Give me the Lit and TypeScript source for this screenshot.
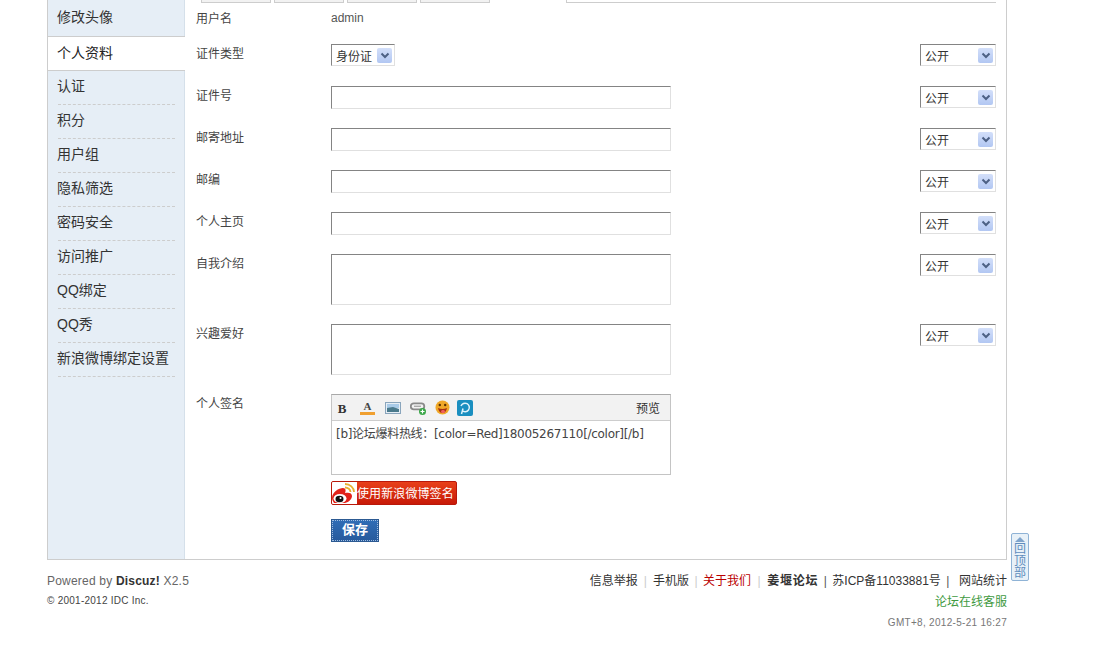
import { LitElement, html, css } from "lit";
import { customElement } from "lit/decorators.js";

const FONT = css`"Liberation Sans", "Noto Sans CJK SC", sans-serif`;

const arrow = html`<span class="arrow"><svg width="14" height="14" viewBox="0 0 14 14"><path d="M3.5 5.5 L7 9 L10.5 5.5" fill="none" stroke="#4d6185" stroke-width="2"/></svg></span>`;

@customElement("app-root")
export class AppRoot extends LitElement {
  static styles = css`
    :host { display: block; font: 12px ${FONT}; color: #444; height: 666px; overflow: hidden; background: #fff; }
    .wrap { width: 960px; margin-left: 47px; box-sizing: border-box; height: 560px; border: 1px solid #cdcdcd; border-top: 0; display: flex; }
    .side { width: 136px; flex: none; background: #e6eef6; border-right: 1px solid #d5e0ea; font-size: 14px; color: #333; }
    .side .it { height: 29px; padding-bottom: 4px; margin: 0 9px 0 10px; border-bottom: 1px dashed #cdcdcd; display: flex; align-items: center; line-height: 20px; text-indent: -1px; }
    .side .it.first { height: 36px; padding-bottom: 2px; border-bottom: 0; box-sizing: border-box; }
    .side .act { height: 29px; padding: 0 0 4px 9px; background: #fff; border-top: 1px solid #cdcdcd; border-bottom: 1px solid #cdcdcd; margin-right: -1px; display: flex; align-items: center; color: #222; position: relative; }
    .main { flex: 1; min-width: 0; display: flex; flex-direction: column; }
    .tabs { height: 3px; display: flex; padding-left: 16px; gap: 3px; flex: none; }
    .tabs i { width: 68px; height: 2px; border: 1px solid #cdcdcd; border-top: 0; background: #f2f2f2; display: block; }
    .tabs b { display: block; height: 2px; width: 429px; border: 1px solid #cdcdcd; border-top: 0; border-right: 0; margin-left: 73px; }
    .form { padding-left: 11px; }
    .row { display: flex; }
    .first-row { height: 32px; padding-top: 7px; box-sizing: border-box; }
    .lab { width: 135px; flex: none; font-size: 12px; color: #444; line-height: 16px; padding-top: 2px; }
    .first-row .lab { padding-top: 1px; }
    .ctl { width: 340px; flex: none; }
    .admin { line-height: 16px; color: #555; }
    .gap { height: 9px; }
    .sp { flex: 1; }
    .pub { width: 76px; margin-right: 10px; flex: none; }
    .sel { height: 22px; box-sizing: border-box; border: 1px solid; border-color: #848484 #e0e0e0 #e0e0e0 #848484; display: flex; align-items: center; justify-content: space-between; padding: 0 2px 0 4px; font-size: 12px; color: #333; background: #fff; }
    .sel.short { width: 64px; }
    .arrow { width: 15px; height: 15px; background: linear-gradient(#d3dffa, #b2c7f2); border-radius: 2px; display: flex; align-items: center; justify-content: center; }
    .inp { width: 340px; height: 23px; box-sizing: border-box; border: 1px solid; border-color: #848484 #e0e0e0 #e0e0e0 #848484; background: #fff; }
    .ta { height: 51px; }
    .ed { width: 340px; height: 81px; box-sizing: border-box; border: 1px solid #c4c4c4; border-top-color: #a9a9a9; }
    .bar { height: 25px; background: #f2f2f2; border-bottom: 1px solid #cdcdcd; display: flex; align-items: center; padding-left: 3px; gap: 9px; }
    .bar svg { display: block; flex: none; }
    .bar svg.a { margin-left: 1px; }
    .bar svg.tight { margin-left: -2px; }
    .prev { margin-left: auto; margin-right: 10px; color: #333; }
    .txt { padding: 5px 4px; line-height: 16px; font-size: 12px; color: #444; white-space: nowrap; letter-spacing: -.3px; font-family: "DejaVu Sans", "Noto Sans CJK SC", sans-serif; }
    .wb { margin-top: 6px; width: 126px; height: 24px; box-sizing: border-box; display: flex; align-items: center; background: linear-gradient(#e8401a, #c81a08); border: 1px solid #b9180a; border-radius: 2px; color: #fff; font-size: 12px; overflow: hidden; }
    .wb .ic { width: 25px; height: 22px; background: #fff; flex: none; display: block; }
    .wb span { white-space: nowrap; padding-bottom: 2px; letter-spacing: .1px; }
    .save { margin-top: 14px; width: 48px; height: 23px; box-sizing: border-box; background: linear-gradient(#2f6db6, #275a9c); border: 1px solid #2c5a92; outline: 1px dotted #9fbde0; outline-offset: -2px; color: #fff; font-weight: bold; font-size: 13px; display: flex; align-items: center; justify-content: center; padding-bottom: 4px; }
    .foot { width: 960px; margin-left: 47px; display: flex; justify-content: space-between; position: relative; }
    .fl { padding-top: 13px; }
    .pw { font-size: 12px; color: #666; line-height: 16px; letter-spacing: .2px; }
    .pw b { color: #333; }
    .cp { font-size: 10px; color: #444; margin-top: 6px; line-height: 12px; letter-spacing: .25px; }
    .fr { padding-top: 13px; text-align: right; }
    .links { font-size: 12px; line-height: 16px; color: #333; display: flex; justify-content: flex-end; align-items: center; }
    .links .s { color: #ccc; margin: 0 6.5px; }
    .links .s.f { margin: 0 6px; }
    .links .s.n { margin: 0 5.5px; }
    .links .s.d { color: #555; margin: 0 5.5px; }
    .links .red { color: #ba0000; }
    .links .bd { font-weight: bold; color: #333; letter-spacing: .75px; }
    .links .st { margin-left: 4px; }
    .on { color: #3f9a3f; margin-top: 5px; line-height: 16px; }
    .gmt { font-size: 10px; color: #777; margin-top: 6px; line-height: 14px; letter-spacing: .3px; }
    .top { position: absolute; left: 964px; top: -27px; width: 18px; height: 48px; box-sizing: border-box; border: 1px solid #8fb3d6; border-radius: 2px; background: #e8f1f8; color: #5f8dbd; font-size: 12px; line-height: 12px; text-align: center; padding-top: 9px; }
    .top::before { content: ""; position: absolute; left: 3px; top: 3px; border: 5px solid transparent; border-top: 0; border-bottom: 5px solid #7fa4cc; }
  `;

  private sel(t: string, short = false) {
    return html`<div class="sel ${short ? "short" : ""}">${t}${arrow}</div>`;
  }

  private row(label: string, ctl: unknown, pub: boolean, h: number) {
    return html`<div class="row" style="height:${h}px">
      <div class="lab">${label}</div>
      <div class="ctl">${ctl}</div>
      <div class="sp"></div>
      ${pub ? html`<div class="pub">${this.sel("公开")}</div>` : html`<div class="pub"></div>`}
    </div>`;
  }

  render() {
    const inp = html`<div class="inp"></div>`;
    const ta = html`<div class="inp ta"></div>`;
    const items = ["认证", "积分", "用户组", "隐私筛选", "密码安全", "访问推广", "QQ绑定", "QQ秀", "新浪微博绑定设置"];
    return html`
      <div class="wrap">
        <div class="side">
          <div class="it first">修改头像</div>
          <div class="act">个人资料</div>
          ${items.map((t) => html`<div class="it">${t}</div>`)}
        </div>
        <div class="main">
          <div class="tabs"><i></i><i></i><i></i><i></i><b></b></div>
          <div class="form">
            <div class="row first-row"><div class="lab">用户名</div><div class="ctl admin">admin</div></div>
            <div class="gap"></div>
            ${this.row("证件类型", this.sel("身份证", true), true, 42)}
            ${this.row("证件号", inp, true, 42)}
            ${this.row("邮寄地址", inp, true, 42)}
            ${this.row("邮编", inp, true, 42)}
            ${this.row("个人主页", inp, true, 42)}
            ${this.row("自我介绍", ta, true, 70)}
            ${this.row("兴趣爱好", ta, true, 70)}
            ${this.row("个人签名", html`
              <div class="ed">
                <div class="bar">
                  <svg width="14" height="14" viewBox="0 0 14 14"><text x="7" y="11.5" text-anchor="middle" font-family="Liberation Serif" font-weight="bold" font-size="13" fill="#333">B</text></svg>
                  <svg class="a" width="17" height="16" viewBox="0 0 17 16"><text x="8.5" y="10" text-anchor="middle" font-family="Liberation Serif" font-weight="bold" font-size="11" fill="#444">A</text><rect x="1" y="12" width="15" height="3" fill="#f0a030"/></svg>
                  <svg width="16" height="14" viewBox="0 0 16 14"><rect x=".5" y="1.5" width="15" height="11" fill="#e6eef5" stroke="#8aa5bc"/><rect x="2" y="3" width="12" height="4" fill="#a9cbe8"/><path d="M2 11 L2 7 L8 6 L14 8 L14 11Z" fill="#4a7a8c"/></svg>
                  <svg width="16" height="14" viewBox="0 0 16 14"><rect x=".8" y="2.3" width="13.5" height="6" rx="3" fill="none" stroke="#8a8a8a" stroke-width="1.8"/><path d="M4 5.3 H11" stroke="#aaa" stroke-width="1.4"/><circle cx="12.5" cy="10.5" r="3.5" fill="#3aa648"/><path d="M12.5 8.5 V12.5 M10.5 10.5 H14.5" stroke="#fff" stroke-width="1.2"/></svg>
                  <svg width="15" height="15" viewBox="0 0 15 15"><circle cx="7.5" cy="7.5" r="7" fill="#f0a828"/><circle cx="4.8" cy="5" r="1.2" fill="#5a3000"/><circle cx="10.2" cy="5" r="1.2" fill="#5a3000"/><path d="M3 8 Q7.5 10 12 8 Q11 13 7.5 13 Q4 13 3 8Z" fill="#a83010"/><rect x="6" y="10" width="4" height="3" rx="1.5" fill="#f06060"/></svg>
                  <svg class="tight" width="16" height="16" viewBox="0 0 16 16"><rect width="16" height="16" rx="2" fill="#1a8fc0"/><path d="M4.5 14 L6 8.5 M5 10.5 A4.3 4.3 0 1 0 4 6" fill="none" stroke="#dff3fb" stroke-width="1.5"/></svg>
                  <span class="prev">预览</span>
                </div>
                <div class="txt">[b]论坛爆料热线：[color=Red]18005267110[/color][/b]</div>
              </div>
              <div class="wb">
                <svg class="ic" viewBox="0 0 25 22"><path d="M0 16 C0 10 7 6 11 6 C14 6 14 9 13 11 C17 10 20 11 20 14 C20 17 17 20 13 21 L2 21 C1 19 0 18 0 16Z" fill="#e2221a"/><ellipse cx="8" cy="16.5" rx="6.5" ry="4.5" fill="#fff"/><ellipse cx="7.5" cy="17" rx="4" ry="3.2" fill="#111"/><circle cx="8.5" cy="16" r="1" fill="#fff"/><path d="M13 2 C18 2 22 5.5 22 10 M13 5.5 C16 5.5 18.5 7.5 18.5 10" fill="none" stroke="#e8b030" stroke-width="1.8"/></svg>
                <span>使用新浪微博签名</span>
              </div>
              <div class="save">保存</div>
            `, false, 150)}
          </div>
        </div>
      </div>
      <div class="foot">
        <div class="fl">
          <div class="pw">Powered by <b>Discuz!</b> X2.5</div>
          <div class="cp">© 2001-2012 IDC Inc.</div>
        </div>
        <div class="fr">
          <div class="links"><span>信息举报</span><span class="s f">|</span><span>手机版</span><span class="s n">|</span><span class="red">关于我们</span><span class="s">|</span><span class="bd">姜堰论坛</span><span class="s d">|</span><span>苏ICP备11033881号</span><span class="s d">|</span><span class="st">网站统计</span></div>
          <div class="on">论坛在线客服</div>
          <div class="gmt">GMT+8, 2012-5-21 16:27</div>
        </div>
        <div class="top">回顶部</div>
      </div>
    `;
  }
}
